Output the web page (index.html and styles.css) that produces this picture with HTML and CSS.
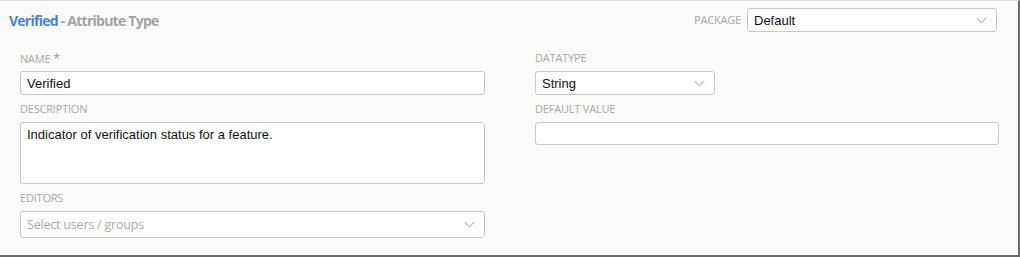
FILE: index.html
```html
<!DOCTYPE html>
<html>
<head>
<meta charset="utf-8">
<link rel="stylesheet" href="styles.css">
</head>
<body>
<div class="panel">
  <div class="header">
    <div class="title"><span class="name">Verified</span><span class="type"> - Attribute Type</span></div>
    <div class="package">
      <span class="label inline">PACKAGE</span>
      <div class="select pkg"><span class="value">Default</span><svg class="chev" viewBox="0 0 12 7"><path d="M1 1l5 5 5-5" fill="none" stroke="#b5b5b5" stroke-width="1.2"/></svg></div>
    </div>
  </div>
  <div class="form">
    <div class="col">
      <div class="field">
        <div class="label">NAME <span class="star">*</span></div>
        <div class="input"><span class="value">Verified</span></div>
      </div>
      <div class="field">
        <div class="label">DESCRIPTION</div>
        <div class="textarea"><span class="value">Indicator of verification status for a feature.</span></div>
      </div>
      <div class="field">
        <div class="label">EDITORS</div>
        <div class="select editors"><span class="placeholder">Select users / groups</span><svg class="chev" viewBox="0 0 12 7"><path d="M1 1l5 5 5-5" fill="none" stroke="#b5b5b5" stroke-width="1.2"/></svg></div>
      </div>
    </div>
    <div class="col">
      <div class="field">
        <div class="label">DATATYPE</div>
        <div class="select dtype"><span class="value">String</span><svg class="chev" viewBox="0 0 12 7"><path d="M1 1l5 5 5-5" fill="none" stroke="#b5b5b5" stroke-width="1.2"/></svg></div>
      </div>
      <div class="field">
        <div class="label">DEFAULT VALUE</div>
        <div class="input dv"></div>
      </div>
    </div>
  </div>
</div>
</body>
</html>
```
FILE: styles.css
```css
* { box-sizing: border-box; }
html, body { margin: 0; padding: 0; background: #fafafa; }
body { font-family: "Open Sans", "Noto Sans", sans-serif; }
.panel {
  width: 1020px;
  height: 257px;
  background: #fafafa;
  border-top: 1px solid #dcdcdc;
  border-right: 2px solid #6b6b6b;
  border-bottom: 2px solid #6b6b6b;
}
.header {
  display: flex;
  justify-content: space-between;
  align-items: center;
  padding: 7px 21px 0 9px;
  height: 31px;
}
.title { font-size: 14px; font-weight: 700; letter-spacing: -0.75px; }
.title .name { color: #4a85c9; }
.title .type { color: #a3a3a3; }
.package { display: flex; align-items: center; gap: 6px; }
.label {
  font-size: 11px;
  line-height: 14px;
  color: #a8a8a8;
  height: 14px;
  margin-bottom: 6px;
  letter-spacing: -0.2px;
}
.label.inline { margin: 0; height: auto; }
.star { color: #999; font-size: 13px; }
.form {
  display: flex;
  gap: 50px;
  padding: 19px 0 0 20px;
}
.col { display: flex; flex-direction: column; gap: 7px; }
.col:first-child { width: 465px; }
.col:last-child { width: 464px; }
.input, .textarea, .select {
  background: #fff;
  border: 1px solid #c8c8c8;
  border-radius: 3px;
  font-family: "Liberation Sans", Arial, sans-serif;
  font-size: 13px;
  color: #111;
  display: flex;
  align-items: center;
  padding: 0 6px;
}
.input { height: 24px; }
.input.dv { height: 23px; }
.textarea { height: 62px; align-items: flex-start; padding-top: 4px; }
.select { justify-content: space-between; height: 24px; padding-right: 9px; }
.select.pkg { width: 250px; }
.select.dtype { width: 180px; }
.select.editors { height: 27px; }
.placeholder { font-family: "Open Sans", sans-serif; color: #aaa; font-size: 12.5px; letter-spacing: -0.2px; }
.chev { width: 11px; height: 7px; display: block; }
```
